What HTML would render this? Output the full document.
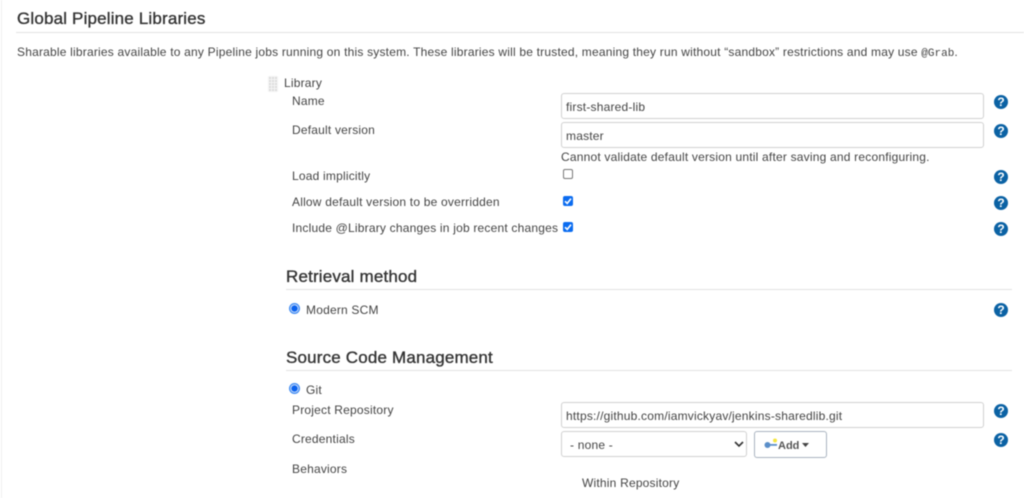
<!DOCTYPE html>
<html>
<head>
<meta charset="utf-8">
<style>
html,body{margin:0;padding:0;background:#fff;}
body{width:1024px;height:498px;overflow:hidden;position:relative;font-family:"Liberation Sans",sans-serif;color:#333;}
#w{position:absolute;left:0;top:0;width:1024px;height:498px;filter:blur(0.45px);}
.t{position:absolute;white-space:nowrap;font-size:12px;letter-spacing:0.2px;line-height:14px;color:#444;}
.h{position:absolute;white-space:nowrap;font-weight:normal;font-size:17px;letter-spacing:0.17px;line-height:20px;color:#333;-webkit-text-stroke:0.35px #333;}
.l{position:absolute;height:1px;background:#e2e2e2;}
.i{position:absolute;box-sizing:border-box;height:26px;border:1px solid #d0d0d0;border-radius:3px;background:#fff;font-size:12px;letter-spacing:0.2px;line-height:26px;padding-left:4px;color:#444;white-space:nowrap;}
.q{position:absolute;width:14px;height:14px;border-radius:50%;background:#0b62a4;color:#fff;font-size:12px;line-height:14px;font-weight:bold;text-align:center;}
.c{position:absolute;box-sizing:border-box;width:10px;height:10px;border-radius:2px;background:#0b6cf0;}
.c svg{position:absolute;left:0;top:0;}
.r{position:absolute;box-sizing:border-box;width:11px;height:11px;border-radius:50%;background:radial-gradient(circle,#0b62ee 0,#0b62ee 2.8px,#cfe0fb 3.5px,#cfe0fb 4px,#3f8bf2 4.4px);}
</style>
</head>
<body>
<div id="w">
<div style="position:absolute;left:1px;top:0;width:1px;height:498px;background:#f0f0f0;"></div>

<div class="h" style="left:17px;top:9px;">Global Pipeline Libraries</div>
<div class="l" style="left:16px;top:32px;width:1008px;"></div>
<div class="t" style="left:17px;top:45px;">Sharable libraries available to any Pipeline jobs running on this system. These libraries will be trusted, meaning they run without “sandbox” restrictions and may use <span style="font-family:'Liberation Mono',monospace;font-size:11px;letter-spacing:0;">@Grab</span>.</div>

<div style="position:absolute;left:268px;top:76px;width:10px;height:16px;background-color:#dcdcdc;background-image:linear-gradient(#f4f4f4 1px,transparent 1px),linear-gradient(90deg,#f4f4f4 1px,transparent 1px);background-size:3px 3px;"></div>
<div class="t" style="left:284px;top:76px;">Library</div>

<div class="t" style="left:292px;top:94px;">Name</div>
<div class="i" style="left:561px;top:93px;width:423px;">first-shared-lib</div>
<div class="q" style="left:994px;top:95px;">?</div>

<div class="t" style="left:292px;top:123px;">Default version</div>
<div class="i" style="left:561px;top:122px;width:423px;">master</div>
<div class="q" style="left:994px;top:124px;">?</div>
<div class="t" style="left:561px;top:150px;">Cannot validate default version until after saving and reconfiguring.</div>

<div class="t" style="left:292px;top:169px;">Load implicitly</div>
<div style="position:absolute;box-sizing:border-box;left:563px;top:169px;width:10px;height:10px;border:1px solid #777;border-radius:2px;background:#fff;"></div>
<div class="q" style="left:994px;top:170px;">?</div>

<div class="t" style="left:292px;top:195px;">Allow default version to be overridden</div>
<div class="c" style="left:563px;top:196px;"><svg width="10" height="10" viewBox="0 0 10 10"><path d="M2 5.2 L4.2 7.4 L8 2.6" fill="none" stroke="#fff" stroke-width="1.6"/></svg></div>
<div class="q" style="left:994px;top:196px;">?</div>

<div class="t" style="left:292px;top:221px;">Include @Library changes in job recent changes</div>
<div class="c" style="left:563px;top:222px;"><svg width="10" height="10" viewBox="0 0 10 10"><path d="M2 5.2 L4.2 7.4 L8 2.6" fill="none" stroke="#fff" stroke-width="1.6"/></svg></div>
<div class="q" style="left:994px;top:222px;">?</div>

<div class="h" style="left:286px;top:267px;">Retrieval method</div>
<div class="l" style="left:286px;top:289px;width:726px;"></div>
<div class="r" style="left:289px;top:303px;"></div>
<div class="t" style="left:306px;top:303px;">Modern SCM</div>
<div class="q" style="left:994px;top:303px;">?</div>

<div class="h" style="left:286px;top:348px;">Source Code Management</div>
<div class="l" style="left:286px;top:370px;width:726px;"></div>
<div class="r" style="left:289px;top:383px;"></div>
<div class="t" style="left:306px;top:383px;">Git</div>

<div class="t" style="left:292px;top:403px;">Project Repository</div>
<div class="i" style="left:561px;top:402px;width:423px;">https://github.com/iamvickyav/jenkins-sharedlib.git</div>
<div class="q" style="left:994px;top:404px;">?</div>

<div class="t" style="left:292px;top:432px;">Credentials</div>
<div class="i" style="left:561px;top:431px;width:186px;padding-left:8px;">- none -
  <svg style="position:absolute;left:172px;top:9px;" width="10" height="7" viewBox="0 0 10 7"><path d="M1 1 L5 5 L9 1" fill="none" stroke="#333" stroke-width="1.6"/></svg>
</div>
<div style="position:absolute;box-sizing:border-box;left:754px;top:431px;width:73px;height:27px;border:1px solid #a9b3bf;border-radius:3px;background:#fff;">
  <svg style="position:absolute;left:9px;top:6px;" width="14" height="12" viewBox="0 0 14 12"><circle cx="11" cy="2.5" r="2" fill="#f5e642"/><circle cx="3.5" cy="7" r="3" fill="#5b8fc9"/><rect x="4" y="6" width="9" height="1.8" fill="#5b8fc9"/></svg>
  <span style="position:absolute;left:23px;top:7px;font-size:11px;line-height:14px;font-weight:bold;color:#555;">Add</span>
  <svg style="position:absolute;left:47px;top:11px;" width="7" height="4" viewBox="0 0 7 4"><path d="M0 0 H7 L3.5 4 Z" fill="#444"/></svg>
</div>
<div class="q" style="left:994px;top:433px;">?</div>

<div class="t" style="left:292px;top:462px;">Behaviors</div>
<div class="t" style="left:582px;top:476px;">Within Repository</div>
</div>
</body>
</html>
